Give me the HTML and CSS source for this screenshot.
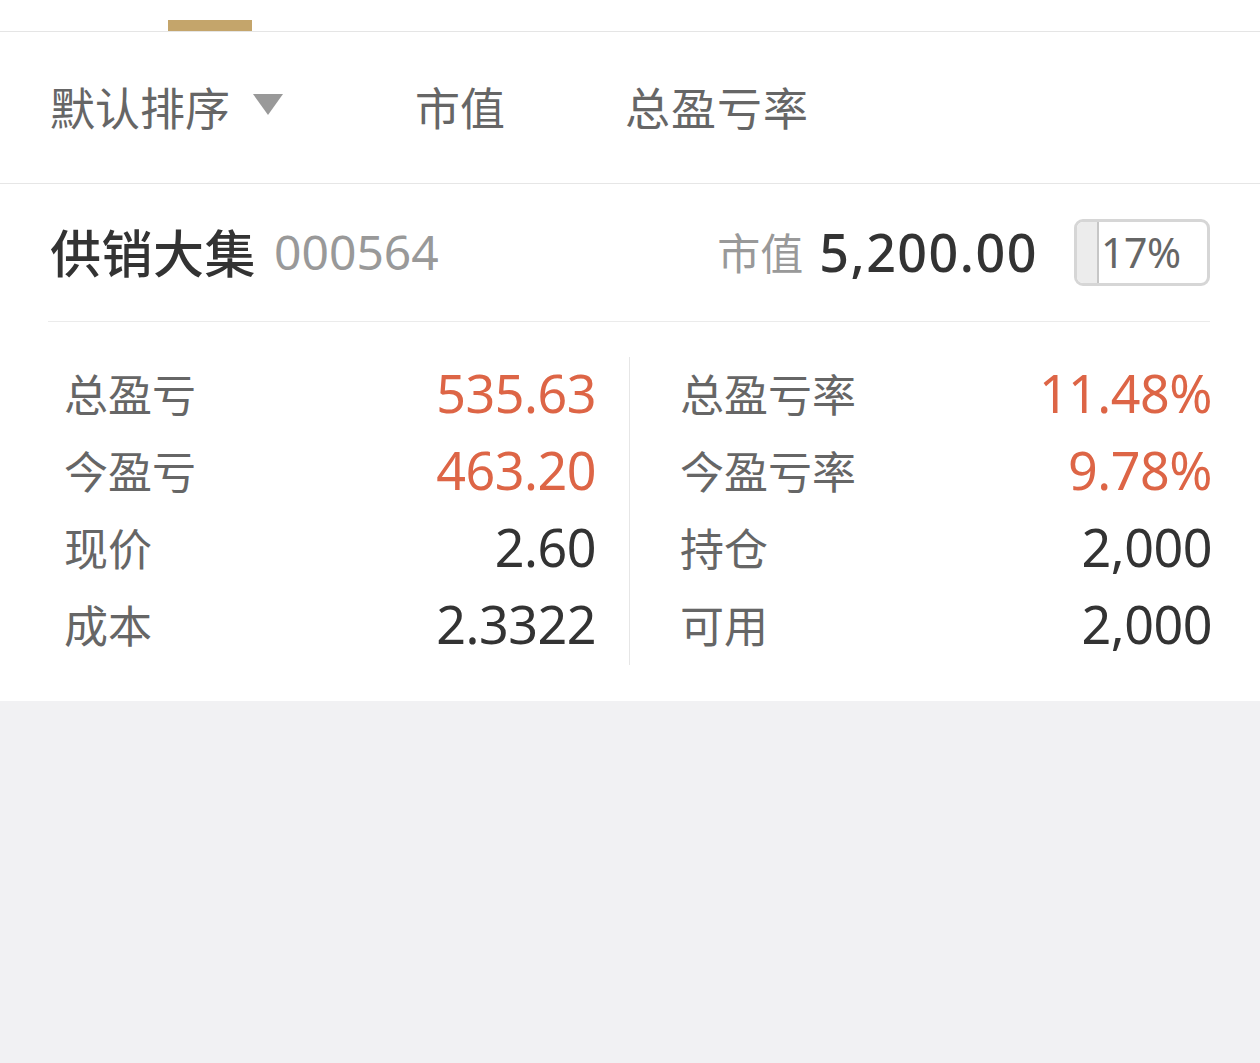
FILE: index.html
```html
<!DOCTYPE html>
<html lang="zh-CN">
<head>
<meta charset="utf-8">
<title>持仓</title>
<link rel="stylesheet" href="styles.css">
</head>
<body>
<div class="tabbar"><div class="tab-indicator"></div></div>
<div class="sortbar">
  <div class="sort-item sort-default">默认排序<svg class="caret" width="30" height="21" viewBox="0 0 30 21"><path d="M0 0H30L15 21Z" fill="#999"/></svg></div>
  <div class="sort-item sort-mv">市值</div>
  <div class="sort-item sort-rate">总盈亏率</div>
</div>
<div class="card">
  <div class="card-head">
    <div class="name">供销大集</div>
    <div class="code">000564</div>
    <div class="spacer"></div>
    <div class="mv-label">市值</div>
    <div class="mv-value">5,200.00</div>
    <div class="ratio"><div class="ratio-fill" style="width:17%"></div><span class="ratio-text">17%</span></div>
  </div>
  <div class="grid">
    <div class="col col-left">
      <div class="row"><span class="label">总盈亏</span><span class="value red">535.63</span></div>
      <div class="row"><span class="label">今盈亏</span><span class="value red">463.20</span></div>
      <div class="row"><span class="label">现价</span><span class="value">2.60</span></div>
      <div class="row"><span class="label">成本</span><span class="value">2.3322</span></div>
    </div>
    <div class="col col-right">
      <div class="row"><span class="label">总盈亏率</span><span class="value red">11.48%</span></div>
      <div class="row"><span class="label">今盈亏率</span><span class="value red">9.78%</span></div>
      <div class="row"><span class="label">持仓</span><span class="value">2,000</span></div>
      <div class="row"><span class="label">可用</span><span class="value">2,000</span></div>
    </div>
  </div>
</div>
</body>
</html>
```
FILE: styles.css
```css
* { box-sizing: border-box; }
html, body { margin: 0; padding: 0; }
body {
  background: #f1f1f3;
  font-family: "Noto Sans CJK SC", "Noto Sans", sans-serif;
  width: 1260px;
  min-height: 1063px;
}
.tabbar {
  height: 32px;
  background: #fff;
  border-bottom: 1px solid #e5e5e5;
  display: flex;
  align-items: flex-end;
}
.tab-indicator {
  margin-left: 168px;
  width: 84px;
  height: 11px;
  background: #c4a56b;
}
.sortbar {
  height: 152px;
  background: #fff;
  border-bottom: 1px solid #e6e6e6;
  display: flex;
  align-items: center;
  padding-left: 50px;
  padding-bottom: 2px;
}
.sort-item {
  font-size: 45px;
  color: #666;
  line-height: 1;
  display: flex;
  align-items: center;
}
.caret { margin-left: 23px; margin-top: -4px; }
.sort-mv { margin-left: 132px; }
.sort-rate { margin-left: 120px; letter-spacing: 1px; }
.card {
  background: #fff;
  padding: 0 50px 0 48px;
}
.card-head {
  height: 138px;
  border-bottom: 1px solid #ebebeb;
  display: flex;
  align-items: center;
  padding-left: 2px;
  padding-bottom: 2px;
}
.name {
  font-size: 51px;
  font-weight: 500;
  color: #333;
  line-height: 1;
  letter-spacing: 0.5px;
}
.code {
  margin-left: 18px;
  font-size: 48px;
  color: #999;
  font-family: "Noto Sans", sans-serif;
  line-height: 1;
}
.spacer { flex: 1; }
.mv-label {
  font-size: 43px;
  color: #999;
  line-height: 1;
}
.mv-value {
  margin-left: 16px;
  font-size: 52px;
  font-weight: 500;
  color: #333;
  font-family: "Noto Sans", sans-serif;
  line-height: 1;
  letter-spacing: 1.5px;
}
.ratio {
  margin-left: 36px;
  width: 136px;
  height: 67px;
  border: 3px solid #d6d6d6;
  border-radius: 9px;
  overflow: hidden;
  display: flex;
  align-items: center;
  position: relative;
  margin-top: 2px;
}
.ratio-fill {
  position: absolute;
  left: 0; top: 0; bottom: 0;
  background: #ececec;
  border-right: 2px solid #c6c6c6;
}
.ratio-text {
  position: relative;
  margin-left: 24px;
  font-family: "Noto Sans", sans-serif;
  font-size: 41px;
  color: #666;
  line-height: 1;
  letter-spacing: -0.5px;
}
.grid {
  display: grid;
  grid-template-columns: 582px 1fr;
  padding: 35px 0 36px;
}
.col {
  display: flex;
  flex-direction: column;
}
.col-left {
  padding-left: 16px;
  padding-right: 35px;
  border-right: 1px solid #e6e6e6;
}
.col-right {
  padding-left: 50px;
}
.row {
  height: 77px;
  display: flex;
  align-items: center;
  justify-content: space-between;
  padding-bottom: 5px;
}
.label {
  font-size: 44px;
  color: #666;
  line-height: 1;
}
.value {
  font-family: "Noto Sans", sans-serif;
  font-size: 52px;
  color: #333;
  line-height: 1;
  letter-spacing: -0.5px;
  margin-right: -2px;
}
.value.red { color: #dd6546; }
```
